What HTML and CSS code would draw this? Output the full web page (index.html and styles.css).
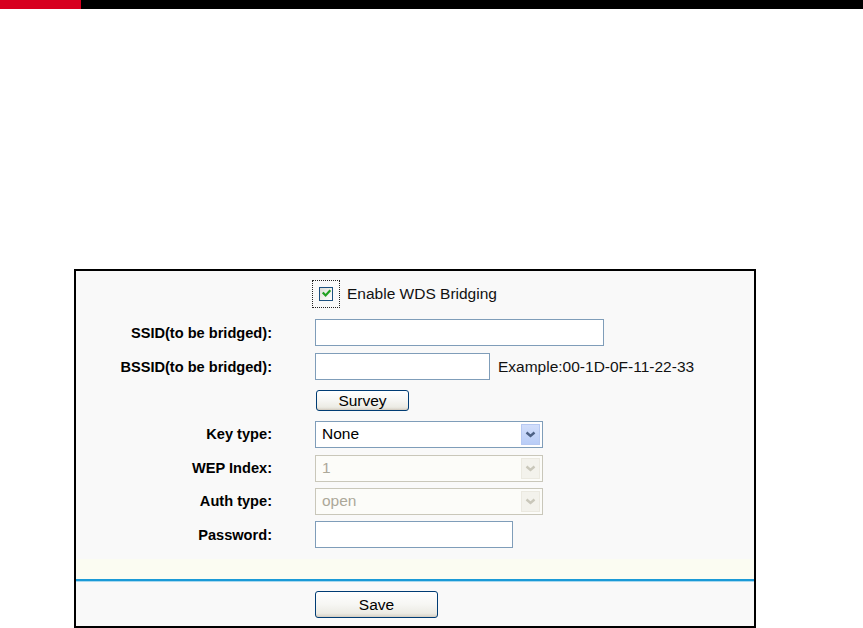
FILE: index.html
```html
<!DOCTYPE html>
<html>
<head>
<meta charset="utf-8">
<link rel="stylesheet" href="styles.css">
</head>
<body>
<div class="topbar"><div class="topbar-red"></div><div class="topbar-black"></div></div>
<div class="spacer"></div>
<div class="panel">
  <div class="form">
    <div class="label"></div>
    <div class="field">
      <span class="focus"><span class="checkbox"><svg width="11" height="11" viewBox="0 0 11 11"><path d="M2.5 5.2 L4.6 7.4 L8.6 3" fill="none" stroke="#21a121" stroke-width="2.2" stroke-linecap="square"/></svg></span></span>
      <span class="cb-text">Enable WDS Bridging</span>
    </div>

    <div class="label">SSID(to be bridged):</div>
    <div class="field"><input class="text ssid" type="text"></div>

    <div class="label">BSSID(to be bridged):</div>
    <div class="field"><input class="text bssid" type="text"><span class="hint">Example:00-1D-0F-11-22-33</span></div>

    <div class="label"></div>
    <div class="field"><button class="btn survey">Survey</button></div>

    <div class="label">Key type:</div>
    <div class="field">
      <div class="select">
        <span class="sel-text">None</span>
        <span class="sel-arrow"><svg width="11" height="7" viewBox="0 0 11 7"><path d="M1.5 1.5 L5.5 5 L9.5 1.5" fill="none" stroke="#4d6185" stroke-width="2.4"/></svg></span>
      </div>
    </div>

    <div class="label">WEP Index:</div>
    <div class="field">
      <div class="select disabled">
        <span class="sel-text">1</span>
        <span class="sel-arrow"><svg width="11" height="7" viewBox="0 0 11 7"><path d="M1.5 1.5 L5.5 5 L9.5 1.5" fill="none" stroke="#c9c7ba" stroke-width="2.4"/></svg></span>
      </div>
    </div>

    <div class="label">Auth type:</div>
    <div class="field">
      <div class="select disabled">
        <span class="sel-text">open</span>
        <span class="sel-arrow"><svg width="11" height="7" viewBox="0 0 11 7"><path d="M1.5 1.5 L5.5 5 L9.5 1.5" fill="none" stroke="#c9c7ba" stroke-width="2.4"/></svg></span>
      </div>
    </div>

    <div class="label">Password:</div>
    <div class="field"><input class="text pwd" type="text"></div>
  </div>
  <div class="band"></div>
  <div class="rule"></div>
  <div class="footer">
    <button class="btn save">Save</button>
  </div>
</div>
</body>
</html>
```

FILE: styles.css
```css
html, body {
  margin: 0;
  padding: 0;
  background: #ffffff;
  font-family: "Liberation Sans", Arial, sans-serif;
}

.topbar {
  display: flex;
  height: 9px;
}
.topbar-red {
  width: 81px;
  background: #d7001f;
}
.topbar-black {
  flex: 1;
  background: #000000;
}

.spacer {
  height: 260px;
}

.panel {
  margin-left: 74px;
  width: 678px;
  border: 2px solid #000000;
  background: #f9f9f9;
}

.form {
  display: grid;
  grid-template-columns: 196px 1fr;
  grid-template-rows: 45px 33px 35px 33px 34px 34px 32px 35px;
  column-gap: 43px;
  align-items: center;
  padding-bottom: 7px;
}

.label {
  text-align: right;
  font-weight: bold;
  font-size: 14.6px;
  color: #000000;
}

.field {
  display: flex;
  align-items: center;
  font-size: 15.5px;
  color: #111111;
}

.focus {
  display: inline-flex;
  margin-left: -3px;
  padding: 6px;
  border: 1px dotted #222222;
}
.checkbox {
  display: inline-flex;
  align-items: center;
  justify-content: center;
  box-sizing: border-box;
  width: 14px;
  height: 14px;
  border: 1px solid #1c5180;
  background: linear-gradient(135deg, #dcdcd5 0%, #f4f4f0 60%, #ffffff 100%);
}
.cb-text {
  margin-left: 7px;
}

.text {
  box-sizing: border-box;
  height: 27px;
  border: 1px solid #7f9db9;
  background: #ffffff;
  padding: 0 4px;
  margin: 0;
  outline: none;
}
.ssid { width: 289px; }
.bssid { width: 175px; }
.pwd { width: 198px; }

.hint {
  margin-left: 8px;
}

.btn {
  box-sizing: border-box;
  margin: 0 0 0 1px;
  padding: 0;
  border: 1px solid #003c74;
  border-radius: 3px;
  background: linear-gradient(#ffffff 0%, #f6f6f3 50%, #ecebe4 85%, #d6d0c5 100%);
  font-family: "Liberation Sans", Arial, sans-serif;
  font-size: 15.5px;
  color: #000000;
  box-shadow: inset 0 -1px 0 #d6d0c5;
}
.survey {
  width: 93px;
  height: 21px;
  line-height: 19px;
}
.save {
  width: 123px;
  height: 27px;
  line-height: 25px;
}

.select {
  box-sizing: border-box;
  width: 228px;
  height: 27px;
  border: 1px solid #7f9db9;
  background: #ffffff;
  display: flex;
  align-items: center;
  padding: 2px;
}
.sel-text {
  flex: 1;
  padding-left: 4px;
  color: #000000;
}
.sel-arrow {
  box-sizing: border-box;
  width: 19px;
  height: 21px;
  display: flex;
  align-items: center;
  justify-content: center;
  background: linear-gradient(#d2defb, #b9cdf7);
  border: 1px solid #b7c9f2;
}
.select.disabled {
  border-color: #c9c7ba;
  background: #fcfcf9;
}
.select.disabled .sel-text {
  color: #aca899;
}
.select.disabled .sel-arrow {
  background: #f3f2ec;
  border-color: #ebe9e0;
}

.band {
  height: 20px;
  background: #fbfcf2;
}
.rule {
  height: 2px;
  background: #1a9ad7;
  border-bottom: 1px solid #a9d9ef;
}

.footer {
  height: 44px;
  display: grid;
  grid-template-columns: 196px 1fr;
  column-gap: 43px;
  align-items: center;
}
.footer .save {
  grid-column: 2;
  justify-self: start;
  margin-left: 0;
}
```
